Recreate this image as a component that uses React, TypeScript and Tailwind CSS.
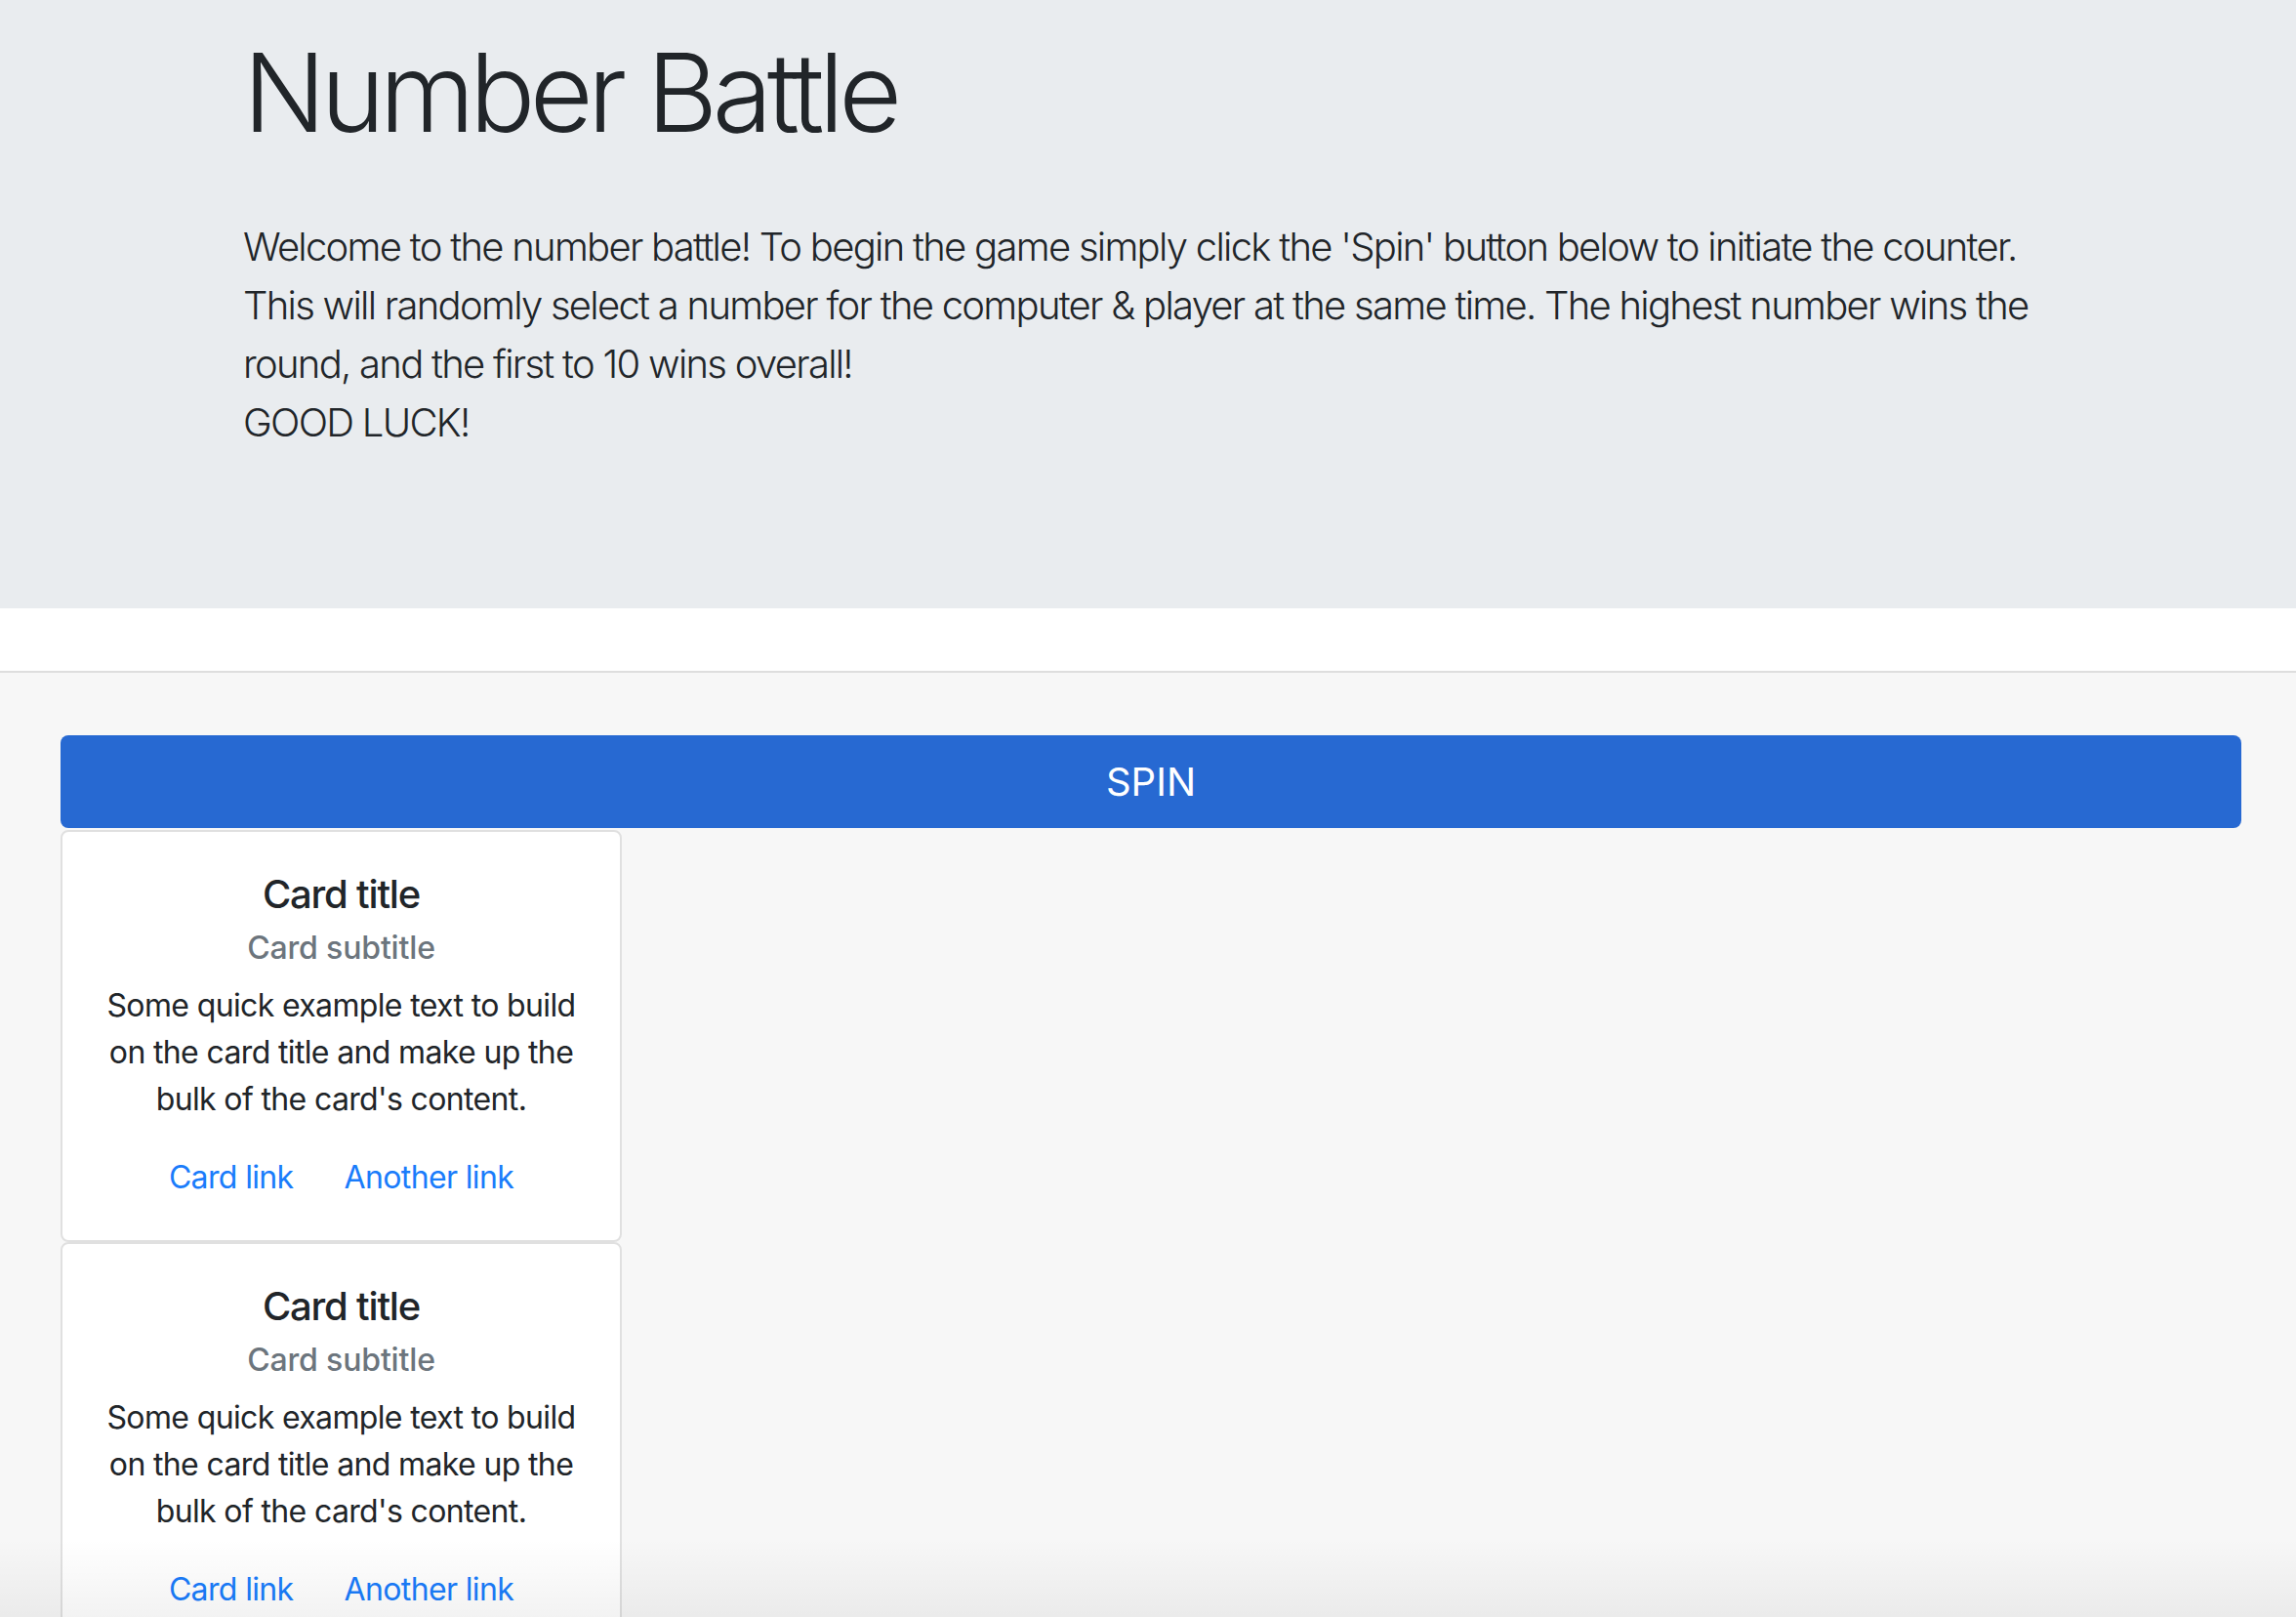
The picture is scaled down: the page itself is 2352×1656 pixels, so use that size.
const cards = [1, 2];

function Card() {
  return (
    <div className="w-[575px] rounded-[8px] border-2 border-[#e0e0e0] bg-white p-[40px] text-center text-[#212529]">
      <h5 className="text-[40px] leading-[48px] font-medium tracking-[-0.03em]">Card title</h5>
      <h6 className="mt-[12px] text-[32px] leading-[38px] font-medium tracking-[-0.005em] text-[#6c757d]">Card subtitle</h6>
      <p className="mt-[16px] text-[32px] leading-[48px] tracking-[-0.02em] whitespace-nowrap">
        Some quick example text to build
        <br />
        on the card title and make up the
        <br />
        bulk of the card's content.
      </p>
      <div className="mt-[32px] flex justify-center gap-[52px] text-[32px] leading-[48px] tracking-[-0.02em] text-[#1a7cfb]">
        <a href="#">Card link</a>
        <a href="#">Another link</a>
      </div>
    </div>
  );
}

export default function App() {
  return (
    <div className="relative h-[1656px] overflow-hidden bg-[#f7f7f7] font-['Inter','Noto_Sans',sans-serif]">
      <header className="bg-[#e9ecef] px-[249px] pt-[27px] pb-[128px] text-[#212529]">
        <h1 className="text-[112px] leading-[1.2] font-light tracking-[-0.05em]">Number Battle</h1>
        <p className="mt-[62px] mb-[32px] text-[40px] leading-[60px] font-light tracking-[-0.043em] whitespace-nowrap">
          Welcome to the number battle! To begin the game simply click the 'Spin' button below to initiate the counter.
          <br />
          This will randomly select a number for the computer &amp; player at the same time. The highest number wins the
          <br />
          round, and the first to 10 wins overall!
          <br />
          GOOD LUCK!
        </p>
      </header>
      <div className="h-[66px] border-b-2 border-[#dedede] bg-white" />
      <main className="pt-[64px] pr-[56px] pl-[62px]">
        <button className="h-[95px] w-full rounded-[8px] bg-[#2769d2] text-[40px] text-white">SPIN</button>
        <div className="mt-[2px] flex flex-col">
          {cards.map((c) => (
            <Card key={c} />
          ))}
        </div>
      </main>
      <div className="pointer-events-none absolute inset-x-0 bottom-0 h-[80px] bg-linear-to-b from-transparent to-black/[0.05]" />
    </div>
  );
}
